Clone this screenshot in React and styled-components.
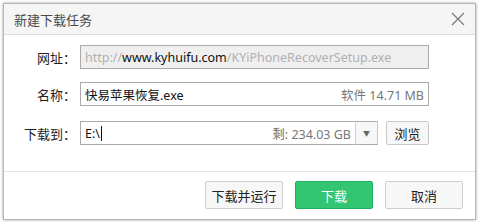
import styled, { createGlobalStyle, css } from 'styled-components';

const GlobalStyle = createGlobalStyle`
  html, body {
    margin: 0;
    padding: 0;
    background: #ffffff;
  }
  body {
    font-family: "Noto Sans", "Noto Sans CJK SC", sans-serif;
    font-size: 13px;
    color: #222;
  }
`;

const Dialog = styled.div`
  margin: 3px;
  width: 471px;
  height: 215px;
  border: 1px solid #b4b4b4;
  box-shadow: 0 0 3px rgba(0, 0, 0, 0.35);
  background: #fff;
  display: flex;
  flex-direction: column;
  box-sizing: content-box;
`;

const Header = styled.div`
  height: 30px;
  background: #f5f5f5;
  border-bottom: 1px solid #dcdcdc;
  display: flex;
  align-items: center;
  justify-content: space-between;
  padding: 0 10px 0 10px;
`;

const Title = styled.div`
  font-family: "Noto Sans CJK SC", sans-serif;
  font-size: 13px;
  color: #4a4a4a;
`;

const Close = styled.button`
  border: none;
  background: none;
  padding: 0;
  width: 14px;
  height: 14px;
  display: flex;
  cursor: pointer;
`;

const Body = styled.div`
  flex: 1;
  padding: 10px 46px 0 0;
  display: flex;
  flex-direction: column;
  border-bottom: 1px solid #e6e6e6;
`;

const Row = styled.div`
  display: flex;
  align-items: center;
  height: 24px;
  margin-bottom: ${p => p.$gap || 0}px;
`;

const Label = styled.div`
  width: 76px;
  flex: none;
  box-sizing: border-box;
  padding-right: 4px;
  display: flex;
  justify-content: flex-end;
  font-family: "Noto Sans CJK SC", sans-serif;
  font-size: 13px;
  color: #222;
`;

const Colon = styled.span`
  width: 13px;
  flex: none;
  text-align: center;
`;

const Field = styled.div`
  flex: 1;
  height: 24px;
  box-sizing: border-box;
  border: 1px solid #aaaaaa;
  background: ${p => (p.$disabled ? '#efefef' : '#fff')};
  display: flex;
  align-items: center;
  padding: 0 4px 0 4px;
  font-family: "Noto Sans", "Noto Sans CJK SC", sans-serif;
  font-size: 12.5px;
  white-space: nowrap;
  overflow: hidden;
`;

const Muted = styled.span`
  color: #b0b0b0;
`;

const Strong = styled.span`
  color: #111;
`;

const Value = styled.span`
  flex: 1;
  color: #111;
  display: flex;
  align-items: center;
`;

const Caret = styled.span`
  display: inline-block;
  width: 1px;
  height: 15px;
  background: #111;
  margin-left: 1px;
`;

const Info = styled.span`
  color: #777;
`;

const Combo = styled.div`
  flex: 1;
  display: flex;
`;

const Arrow = styled.div`
  width: 23px;
  height: 24px;
  box-sizing: border-box;
  border: 1px solid #aaaaaa;
  border-left: 1px solid #d0d0d0;
  border-right-color: #c8c8c8;
  background: #f7f7f7;
  display: flex;
  align-items: center;
  justify-content: center;
  font-size: 7px;
  color: #666;
  margin-left: -1px;
`;

const SmallButton = styled.button`
  margin-left: 8px;
  width: 43px;
  height: 24px;
  border: 1px solid #c8c8c8;
  border-radius: 2px;
  background: #f7f7f7;
  font-family: "Noto Sans CJK SC", sans-serif;
  font-size: 13px;
  color: #222;
  padding: 0;
`;

const Footer = styled.div`
  height: 47px;
  display: flex;
  align-items: flex-start;
  justify-content: flex-end;
  gap: 12px;
  padding: 9px 12px 0 0;
  box-sizing: border-box;
`;

const Button = styled.button`
  width: 78px;
  height: 28px;
  border-radius: 2px;
  font-family: "Noto Sans CJK SC", sans-serif;
  font-size: 13px;
  padding: 0;
  border: 1px solid #cfcfcf;
  background: #f7f7f7;
  color: #222;
  ${p =>
    p.$primary &&
    css`
      border-color: #22b061;
      background: #32c572;
      color: #fff;
    `}
`;

export default function App() {
  return (
    <>
      <GlobalStyle />
      <Dialog>
        <Header>
          <Title>新建下载任务</Title>
          <Close aria-label="close">
            <svg width="14" height="14" viewBox="0 0 14 14">
              <path d="M1 1 L13 13 M13 1 L1 13" stroke="#777" strokeWidth="1.2" />
            </svg>
          </Close>
        </Header>
        <Body>
          <Row $gap={13}>
            <Label>网址<Colon>：</Colon></Label>
            <Field $disabled>
              <Muted>http://</Muted>
              <Strong>www.kyhuifu.com</Strong>
              <Muted>/KYiPhoneRecoverSetup.exe</Muted>
            </Field>
          </Row>
          <Row $gap={15}>
            <Label>名称<Colon>：</Colon></Label>
            <Field>
              <Value>快易苹果恢复.exe</Value>
              <Info>软件 14.71 MB</Info>
            </Field>
          </Row>
          <Row>
            <Label>下载到<Colon>：</Colon></Label>
            <Combo>
              <Field>
                <Value>
                  E:\
                  <Caret />
                </Value>
                <Info>剩: 234.03 GB</Info>
              </Field>
              <Arrow>▼</Arrow>
            </Combo>
            <SmallButton>浏览</SmallButton>
          </Row>
        </Body>
        <Footer>
          <Button>下载并运行</Button>
          <Button $primary>下载</Button>
          <Button>取消</Button>
        </Footer>
      </Dialog>
    </>
  );
}
